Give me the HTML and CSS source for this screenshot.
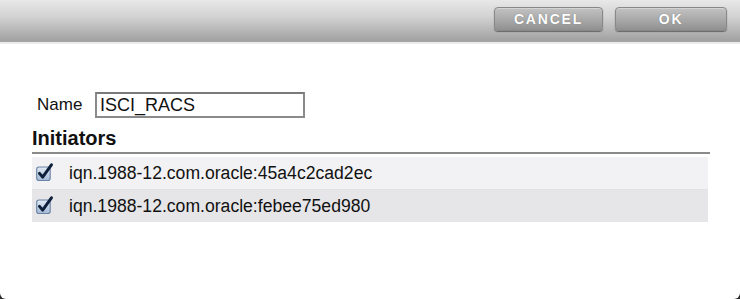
FILE: index.html
```html
<!DOCTYPE html>
<html>
<head>
<meta charset="utf-8">
<link rel="stylesheet" href="styles.css">
</head>
<body>
<div class="dialog">
  <div class="toolbar">
    <button class="btn btn-cancel">CANCEL</button>
    <button class="btn btn-ok">OK</button>
  </div>
  <div class="content">
    <div class="name-row">
      <label class="name-label">Name</label>
      <div class="name-input">ISCI_RACS</div>
    </div>
    <h2 class="section-title">Initiators</h2>
    <div class="list">
      <div class="row row-odd">
        <span class="check"><svg width="18" height="18" viewBox="0 0 16 16"><defs><linearGradient id="g1" x1="0" y1="0" x2="0" y2="1"><stop offset="0" stop-color="#e4ecf6"/><stop offset="1" stop-color="#a4bad6"/></linearGradient></defs><rect x="1.5" y="3.5" width="12" height="12" rx="2" fill="url(#g1)" stroke="#6a83a6"/><path d="M4 9.2 L6.8 12.6 L14.6 1.6" fill="none" stroke="#0d1f3a" stroke-width="2.6" stroke-linecap="round" stroke-linejoin="round"/></svg></span>
        <span class="iqn">iqn.1988-12.com.oracle:45a4c2cad2ec</span>
      </div>
      <div class="row row-even">
        <span class="check"><svg width="18" height="18" viewBox="0 0 16 16"><defs><linearGradient id="g2" x1="0" y1="0" x2="0" y2="1"><stop offset="0" stop-color="#e4ecf6"/><stop offset="1" stop-color="#a4bad6"/></linearGradient></defs><rect x="1.5" y="3.5" width="12" height="12" rx="2" fill="url(#g2)" stroke="#6a83a6"/><path d="M4 9.2 L6.8 12.6 L14.6 1.6" fill="none" stroke="#0d1f3a" stroke-width="2.6" stroke-linecap="round" stroke-linejoin="round"/></svg></span>
        <span class="iqn">iqn.1988-12.com.oracle:febee75ed980</span>
      </div>
    </div>
  </div>
</div>
</body>
</html>
```

FILE: styles.css
```css
html, body {
  margin: 0;
  padding: 0;
  background: #2a2a2a;
}
body {
  width: 740px;
  height: 299px;
  overflow: hidden;
  font-family: "Liberation Sans", Arial, sans-serif;
}
.dialog {
  width: 740px;
  height: 299px;
  background: #ffffff;
  border-radius: 0 0 6px 6px;
  overflow: hidden;
}
.toolbar {
  height: 44px;
  background: linear-gradient(to bottom, #e8e8e8 0%, #d2d2d2 40%, #a3a3a3 95%, #a3a3a3 100%);
  border-bottom: 2px solid #ececec;
  display: flex;
  justify-content: flex-end;
  align-items: flex-start;
  padding: 7px 13px 0 0;
  box-sizing: border-box;
  gap: 12px;
}
.btn {
  width: 109px;
  height: 24px;
  border: 1px solid #888;
  border-radius: 4px;
  background: linear-gradient(to bottom, #c2c2c2 0%, #a8a8a8 55%, #909090 100%);
  box-shadow: inset 0 1px 0 #d4d4d4, 0 1px 1px #666;
  color: #ffffff;
  font-family: "Liberation Sans", Arial, sans-serif;
  font-weight: bold;
  font-size: 14px;
  letter-spacing: 1.8px;
  padding: 0;
  text-shadow: 0 0 1px #6e6e6e;
}
.btn-ok {
  width: 112px;
}
.content {
  padding: 48px 30px 0 32px;
}
.name-row {
  display: flex;
  align-items: center;
  padding-left: 5px;
}
.name-label {
  font-size: 17px;
  color: #111;
  width: 58px;
}
.name-input {
  width: 203px;
  height: 22px;
  border: 2px solid #8a8a8a;
  border-top-color: #7a7a7a;
  font-size: 18px;
  line-height: 23px;
  padding-left: 3px;
  color: #111;
}
.section-title {
  margin: 9px 0 0 0;
  font-size: 20px;
  line-height: 23px;
  font-weight: bold;
  color: #111;
  padding-bottom: 2px;
  border-bottom: 2px solid #8a8a8a;
}
.list {
  margin-top: 3px;
  margin-right: 2px;
}
.row {
  height: 32px;
  display: flex;
  align-items: center;
  font-size: 17.6px;
  color: #111;
}
.row-odd {
  background: #f2f2f4;
  border-bottom: 1px solid #e2e2e4;
}
.row-even {
  background: #e6e6e8;
}
.check {
  width: 18px;
  height: 18px;
  margin-left: 3px;
  margin-right: 16px;
  margin-top: -3px;
  display: block;
}
.check svg {
  display: block;
}
```
